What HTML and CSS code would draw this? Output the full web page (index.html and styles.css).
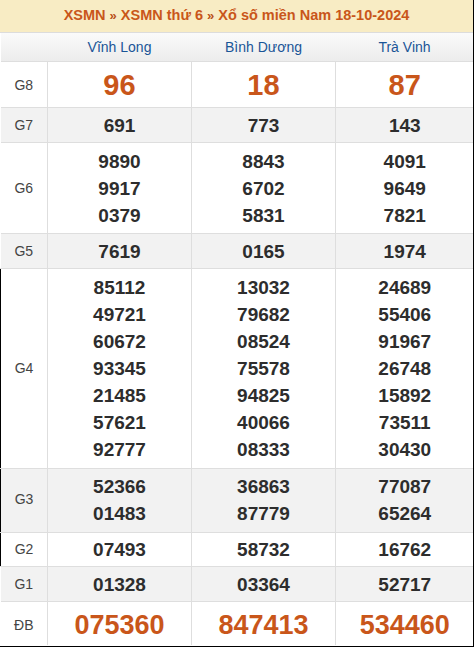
FILE: index.html
```html
<!DOCTYPE html>
<html lang="vi">
<head>
<meta charset="utf-8">
<title>XSMN thứ 6</title>
<link rel="stylesheet" href="styles.css">
</head>
<body>
<div class="box">
  <div class="title">XSMN <span class="sep">»</span> XSMN thứ 6 <span class="sep">»</span> Xổ số miền Nam 18-10-2024</div>
  <table class="kq">
    <colgroup><col class="c0"><col class="c1"><col class="c2"><col class="c3"></colgroup>
    <thead>
      <tr class="head"><th></th><th>Vĩnh Long</th><th>Bình Dương</th><th>Trà Vinh</th></tr>
    </thead>
    <tbody>
      <tr class="big"><td class="lbl">G8</td><td>96</td><td>18</td><td>87</td></tr>
      <tr class="alt"><td class="lbl">G7</td><td>691</td><td>773</td><td>143</td></tr>
      <tr class="multi"><td class="lbl">G6</td><td>9890<br>9917<br>0379</td><td>8843<br>6702<br>5831</td><td>4091<br>9649<br>7821</td></tr>
      <tr class="alt"><td class="lbl">G5</td><td>7619</td><td>0165</td><td>1974</td></tr>
      <tr class="g4"><td class="lbl edge">G4</td><td>85112<br>49721<br>60672<br>93345<br>21485<br>57621<br>92777</td><td>13032<br>79682<br>08524<br>75578<br>94825<br>40066<br>08333</td><td>24689<br>55406<br>91967<br>26748<br>15892<br>73511<br>30430</td></tr>
      <tr class="alt multi g3"><td class="lbl edge">G3</td><td>52366<br>01483</td><td>36863<br>87779</td><td>77087<br>65264</td></tr>
      <tr class="g2"><td class="lbl edge">G2</td><td>07493</td><td>58732</td><td>16762</td></tr>
      <tr class="alt"><td class="lbl">G1</td><td>01328</td><td>03364</td><td>52717</td></tr>
      <tr class="big db"><td class="lbl">ĐB</td><td>075360</td><td>847413</td><td>534460</td></tr>
    </tbody>
  </table>
</div>
</body>
</html>
```
FILE: styles.css
```css
* { box-sizing: border-box; }
html, body { margin: 0; padding: 0; background: #fff; }
body { font-family: "Liberation Sans", Arial, sans-serif; }
.box {
  width: 474px;
  height: 647px;
  border-right: 1px solid #000;
  border-bottom: 1px solid #000;
  overflow: hidden;
}
.title {
  height: 33px;
  line-height: 31px;
  background: #f8ecc4;
  border-bottom: 1px solid #dcdcdc;
  color: #c9561a;
  font-weight: bold;
  font-size: 14.5px;
  text-align: center;
}
.title .sep { font-size: 13px; color: #b94f17; }
.kq {
  width: 473px;
  border-collapse: collapse;
  table-layout: fixed;
}
.c0 { width: 47px; }
.c1 { width: 144px; }
.c2 { width: 144px; }
.c3 { width: 138px; }
.head th {
  height: 28px;
  padding: 0;
  font-weight: normal;
  font-size: 14px;
  color: #1a5597;
  background: linear-gradient(#fafafa, #ececec);
  border-bottom: 1px solid #dedede;
  text-align: center;
}
.kq td {
  border: 1px solid #dedede;
  border-top: 0;
  padding: 4px 0 3px;
  line-height: 27px;
  text-align: center;
  font-size: 19px;
  font-weight: bold;
  color: #2d2d2d;
  vertical-align: middle;
}
.kq tr td:first-child { border-left: 0; }
.kq tr td:last-child { border-right: 0; }
.kq td.lbl {
  font-size: 14px;
  font-weight: normal;
  color: #444;
}
.kq td.lbl.edge { border-left: 1px solid #000; }
.alt td { background: #f2f2f2; }
.big td { line-height: 38px; font-size: 29px; color: #c9561a; }
.db td { line-height: 34px; font-size: 27px; border-bottom: 0; padding: 6px 0 3px; }
.multi td { padding: 5px 0 4px; }
.g3 td { padding: 4px 0 5px; }
.g4 td { padding: 5px 0 5px; }
.g2 td { padding: 3px 0; }
```
